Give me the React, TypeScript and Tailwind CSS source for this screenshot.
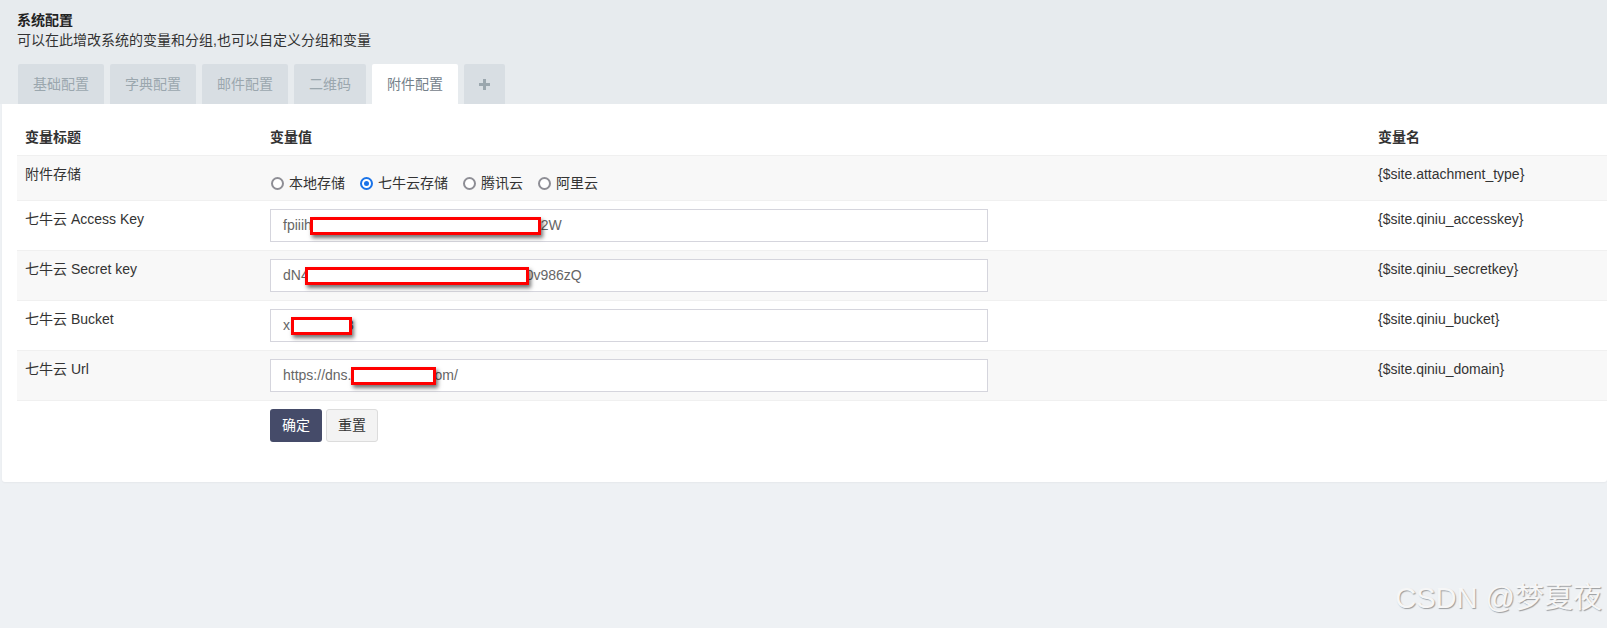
import { ReactNode } from "react";

interface Row {
  label: string;
  name: string;
  value: ReactNode;
}

const tabs = ["基础配置", "字典配置", "邮件配置", "二维码"];

// 打码用的红框
const Mask = ({ w, ml }: { w: number; ml: number }) => (
  <span
    className="relative z-10 inline-block h-[18px] align-middle border-[3px] border-[#ff0000] bg-white shadow-[2px_3px_4px_rgba(0,0,0,0.55)]"
    style={{ width: w, marginLeft: ml }}
  />
);

const Field = ({ children }: { children: ReactNode }) => (
  <div className="flex h-[33px] w-[718px] items-center border border-[#d5d5dd] bg-white pl-[12px] text-[14px] text-[#666] whitespace-nowrap">
    {children}
  </div>
);

const Radio = ({ label, checked }: { label: string; checked?: boolean }) => (
  <label className="flex items-center mr-[14px]">
    {checked ? (
      <span className="ml-[1px] flex h-[13px] w-[13px] items-center justify-center rounded-full border-2 border-[#1a73e8] bg-white">
        <span className="h-[5px] w-[5px] rounded-full bg-[#1a73e8]" />
      </span>
    ) : (
      <span className="ml-[1px] h-[13px] w-[13px] rounded-full border-2 border-[#8e8e95] bg-white" />
    )}
    <span className="ml-[5px]">{label}</span>
  </label>
);

const rows: Row[] = [
  {
    label: "七牛云 Access Key",
    name: "{$site.qiniu_accesskey}",
    value: (
      <Field>
        <span>fpiiih</span>
        <Mask w={231} ml={-2} />
        <span>2W</span>
      </Field>
    ),
  },
  {
    label: "七牛云 Secret key",
    name: "{$site.qiniu_secretkey}",
    value: (
      <Field>
        <span>dN4</span>
        <Mask w={224} ml={-4} />
        <span className="-ml-[3px]">0v986zQ</span>
      </Field>
    ),
  },
  {
    label: "七牛云 Bucket",
    name: "{$site.qiniu_bucket}",
    value: (
      <Field>
        <span>x</span>
        <Mask w={61} ml={1} />
        <span className="-ml-[6px]">3</span>
      </Field>
    ),
  },
  {
    label: "七牛云 Url",
    name: "{$site.qiniu_domain}",
    value: (
      <Field>
        <span>https://dns.</span>
        <Mask w={85} ml={0} />
        <span className="-ml-[2px]">om/</span>
      </Field>
    ),
  },
];

export default function App() {
  return (
    <div className="relative h-[628px] overflow-hidden bg-[#eef1f4] text-[14px] text-[#333] font-['Liberation_Sans','Noto_Sans_CJK_SC',sans-serif]">
      {/* 页头 */}
      <div className="h-[104px] bg-[#e7ebee] pl-[17px] pt-[10px]">
        <div className="font-bold leading-[20px] text-[#222]">系统配置</div>
        <div className="leading-[20px] text-[#333]">可以在此增改系统的变量和分组,也可以自定义分组和变量</div>
        <div className="mt-[14px] flex gap-[6px] pl-[1px]">
          {tabs.map((t) => (
            <div
              key={t}
              className="flex h-[40px] items-center rounded-t-[2px] bg-[#d8dee3] px-[15px] text-[#9ba7ae]"
            >
              {t}
            </div>
          ))}
          <div className="flex h-[40px] items-center rounded-t-[2px] bg-white px-[15px] text-[#74818a]">
            附件配置
          </div>
          <div className="flex h-[40px] w-[41px] items-center justify-center rounded-t-[2px] bg-[#d8dee3]">
            <svg width="11" height="11" viewBox="0 0 11 11">
              <rect x="0" y="4" width="11" height="3" fill="#9ba7ae" />
              <rect x="4" y="0" width="3" height="11" fill="#9ba7ae" />
            </svg>
          </div>
        </div>
      </div>

      {/* 内容面板 */}
      <div className="ml-[2px] h-[378px] rounded-b-[3px] bg-white pl-[15px] pt-[16px] shadow-[0_1px_2px_rgba(0,0,0,0.04)]">
        <div className="grid grid-cols-[245px_1108px_1fr]">
          <div className="flex h-[35px] items-center pl-[8px] font-bold">变量标题</div>
          <div className="flex h-[35px] items-center pl-[8px] font-bold">变量值</div>
          <div className="flex h-[35px] items-center pl-[8px] font-bold">变量名</div>
        </div>

        <div className="grid h-[45px] grid-cols-[245px_1108px_1fr] border-t border-[#f0f0f0] bg-[#f8f8f8]">
          <div className="pl-[8px] pt-[8px] leading-[20px]">附件存储</div>
          <div className="pl-[8px] pt-[8px]">
            <div className="mt-[9px] flex h-[20px] items-center">
              <Radio label="本地存储" />
              <Radio label="七牛云存储" checked />
              <Radio label="腾讯云" />
              <Radio label="阿里云" />
            </div>
          </div>
          <div className="pl-[8px] pt-[8px] leading-[20px]">{"{$site.attachment_type}"}</div>
        </div>

        {rows.map((r, i) => (
          <div
            key={r.name}
            className={`grid h-[50px] grid-cols-[245px_1108px_1fr] border-t border-[#f0f0f0] ${
              i % 2 === 1 ? "bg-[#f8f8f8]" : "bg-white"
            }`}
          >
            <div className="pl-[8px] pt-[8px] leading-[20px]">{r.label}</div>
            <div className="pl-[8px] pt-[8px]">{r.value}</div>
            <div className="pl-[8px] pt-[8px] leading-[20px]">{r.name}</div>
          </div>
        ))}

        <div className="grid grid-cols-[245px_1108px_1fr] border-t border-[#f0f0f0]">
          <div />
          <div className="flex gap-[4px] pl-[8px] pt-[8px]">
            <button className="h-[33px] w-[52px] rounded-[3px] bg-[#454b69] text-white">确定</button>
            <button className="h-[33px] w-[52px] rounded-[3px] border border-[#dcdcdc] bg-[#f3f3f3] text-[#333]">
              重置
            </button>
          </div>
          <div />
        </div>
      </div>

      {/* 水印 */}
      <div className="absolute right-[5px] top-[581px] text-[29px] leading-[34px] text-[#f6f6f6] [text-shadow:1px_1px_1px_rgba(0,0,0,0.35)]">
        CSDN @梦夏夜
      </div>
    </div>
  );
}
